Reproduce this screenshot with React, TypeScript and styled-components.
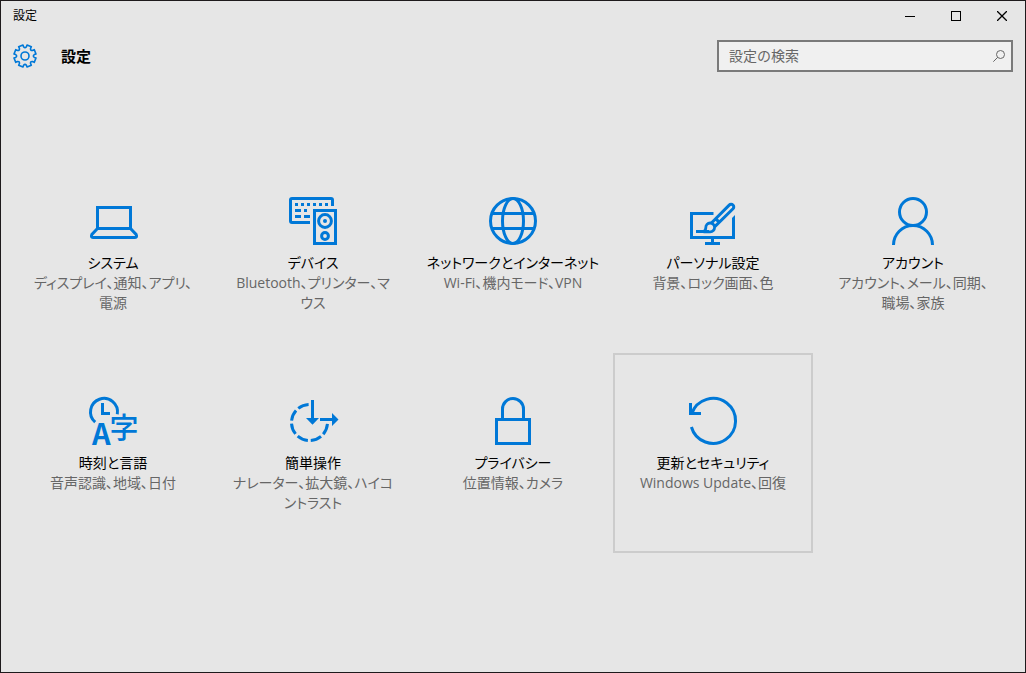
import React from "react";
import styled, { createGlobalStyle } from "styled-components";

const GlobalStyle = createGlobalStyle`
  *, *::before, *::after { box-sizing: border-box; }
  body {
    margin: 0;
    background: #e6e6e6;
    color: #000;
    font-family: "Open Sans", "Noto Sans CJK JP", sans-serif;
    font-size: 14px;
    line-height: 20px;
    font-feature-settings: "palt";
  }
`;

const Window = styled.div`
  min-height: 100vh;
  border: 1px solid #1e1a1c;
  background: #e6e6e6;
`;

const TitleBar = styled.div`
  display: flex;
  align-items: center;
  justify-content: space-between;
  height: 30px;
  padding-left: 12px;
  font-size: 12px;
`;

const CaptionButtons = styled.div`
  display: flex;
`;

const CaptionButton = styled.button`
  display: flex;
  align-items: center;
  justify-content: center;
  width: 46px;
  height: 30px;
  padding: 0;
  border: 0;
  background: none;
`;

const Header = styled.header`
  display: flex;
  align-items: center;
  gap: 24px;
  padding: 9px 12px 0;
`;

const Heading = styled.h1`
  flex: 1;
  margin: 0;
  font-size: 15px;
  font-weight: 700;
`;

const SearchBox = styled.label`
  display: flex;
  align-items: center;
  width: 296px;
  height: 32px;
  padding: 0 6px 0 10px;
  border: 2px solid #7a7a7a;
  background: #f0f0f0;
`;

const SearchInput = styled.input`
  flex: 1;
  min-width: 0;
  padding: 0;
  border: 0;
  outline: 0;
  background: none;
  font: inherit;
  font-feature-settings: normal;
  &::placeholder { color: #666; opacity: 1; }
`;

const Grid = styled.main`
  display: grid;
  grid-template-columns: repeat(auto-fill, 200px);
  justify-content: center;
  padding: 81px 12px 0;
`;

const Tile = styled.a<{ $active?: boolean }>`
  display: flex;
  flex-direction: column;
  align-items: center;
  height: 200px;
  padding-top: 42px;
  border: 2px solid ${(p) => (p.$active ? "#cccccc" : "transparent")};
  color: #000;
  text-align: center;
  text-decoration: none;
  white-space: nowrap;
`;

const TileIcon = styled.svg`
  width: 48px;
  height: 48px;
  margin-bottom: 8px;
  overflow: visible;
  fill: none;
  stroke: #0078d7;
  stroke-width: 3;
  .solid { fill: #0078d7; stroke: none; }
`;

const TileTitle = styled.span``;

const TileText = styled.span`
  color: #666;
  white-space: pre-line;
`;

const gearPath = (() => {
  const at = (deg: number, r: number) => {
    const a = (deg * Math.PI) / 180;
    return `${(12 + r * Math.cos(a)).toFixed(2)} ${(12 + r * Math.sin(a)).toFixed(2)}`;
  };
  let d = `M${at(10, 11.2)}`;
  for (let i = 0; i < 8; i++) {
    const c = i * 45 + 22.5;
    d += `L${at(c - 12, 11.2)}L${at(c + 12, 11.2)}L${at(c + 14, 9.4)}Q${at(c + 22.5, 7.4)} ${at(c + 31, 9.4)}`;
  }
  return `${d}Z`;
})();

const GearIcon = () => (
  <svg width="24" height="24" viewBox="0 0 24 24" fill="none" stroke="#0078d7" strokeWidth="1.6" strokeLinejoin="round" aria-hidden="true">
    <path d={gearPath} />
    <circle cx="12" cy="12" r="4" />
  </svg>
);

const LaptopIcon = (
  <>
    <rect x="8.5" y="10.5" width="33" height="21" />
    <path d="M8.5 31.5 2.9 37.4Q1.6 40.5 4 40.5H46Q48.4 40.5 47.1 37.4L41.5 31.5" />
  </>
);

const DevicesIcon = (
  <>
    <path d="M21 25.5H3Q1.5 25.5 1.5 24V3Q1.5 1.5 3 1.5H42Q43.5 1.5 43.5 3V9" />
    <path className="solid" d="M6 6h3v3h-3zM12 6h3v3h-3zM18 6h3v3h-3zM24 6h3v3h-3zM30 6h3v3h-3zM36 6h3v3h-3zM6 12h6v3h-6zM15 12h3v3h-3zM6 18h6v3h-6zM15 18h6v3h-6z" />
    <rect x="25.5" y="13.5" width="21" height="33" />
    <circle cx="36" cy="24" r="6.4" />
    <circle className="solid" cx="36" cy="24" r="2" />
    <circle cx="36" cy="39" r="3.4" />
  </>
);

const GlobeIcon = (
  <>
    <circle cx="24" cy="24" r="22.5" />
    <ellipse cx="24" cy="24" rx="10.5" ry="22.5" />
    <path d="M3 16.5H45M3 31.5H45" />
  </>
);

const BrushIcon = (
  <>
    <path d="M24.5 16.5H2.5V40.5H44.5V21" />
    <path className="solid" d="M43 21 46 18V21Z" />
    <path d="M23.5 42V46.5M16 46.5H31" />
    <path d="M7 34.5H20" />
    <path d="M14.5 34.5Q16.8 33.6 16.8 30.6A4.4 4.4 0 1 1 21.2 34.8H14.5" strokeWidth="2.8" />
    <path d="M22.4 26 40.2 8.1A2.5 2.5 0 0 1 44 11.8L25.8 29.6M26.6 21.6 30.6 25.6" strokeWidth="3" />
  </>
);

const PersonIcon = (
  <>
    <circle cx="24" cy="15" r="13.5" />
    <path d="M4.5 48A19.5 19.5 0 0 1 43.5 48" />
  </>
);

const IconLetter = styled.text`
  fill: #0078d7;
  stroke: none;
  font-family: "Noto Sans CJK JP", sans-serif;
  font-weight: 700;
`;

const IconKanji = styled(IconLetter)`
  font-weight: 500;
`;

const LanguageIcon = (
  <>
    <path d="M6.2 25.2A13.5 13.5 0 1 1 28.3 17.3" />
    <path d="M13.5 6V16.5H21" />
    <IconLetter x="3" y="48" fontSize="29">A</IconLetter>
    <IconKanji x="20.5" y="42" fontSize="29">字</IconKanji>
  </>
);

const EaseIcon = (
  <>
    <path d="M38.5 25.5A18 18 0 1 1 20.5 7.5" strokeDasharray="11.14 3" strokeDashoffset="-1.5" />
    <path d="M23.5 3V22M31 22.5H44" />
    <path className="solid" d="M17 21H30L23.5 27.7ZM43 16V29L49.5 22.5Z" />
  </>
);

const LockIcon = (
  <>
    <rect x="7.5" y="22.5" width="33" height="24" />
    <path d="M13.5 22.5V12A10.5 10.5 0 0 1 34.5 12V22.5" />
  </>
);

const UpdateIcon = (
  <>
    <path d="M2.8 16.5A22.5 22.5 0 1 1 2.4 30" />
    <path d="M1.5 6V16.5H12" />
  </>
);

const categories: { title: string; text: string; icon: React.ReactNode; active?: boolean }[] = [
  { title: "システム", text: "ディスプレイ、通知、アプリ、\n電源", icon: LaptopIcon },
  { title: "デバイス", text: "Bluetooth、プリンター、マ\nウス", icon: DevicesIcon },
  { title: "ネットワークとインターネット", text: "Wi-Fi、機内モード、VPN", icon: GlobeIcon },
  { title: "パーソナル設定", text: "背景、ロック画面、色", icon: BrushIcon },
  { title: "アカウント", text: "アカウント、メール、同期、\n職場、家族", icon: PersonIcon },
  { title: "時刻と言語", text: "音声認識、地域、日付", icon: LanguageIcon },
  { title: "簡単操作", text: "ナレーター、拡大鏡、ハイコ\nントラスト", icon: EaseIcon },
  { title: "プライバシー", text: "位置情報、カメラ", icon: LockIcon },
  { title: "更新とセキュリティ", text: "Windows Update、回復", icon: UpdateIcon, active: true },
];

export default function App() {
  return (
    <Window lang="ja">
      <GlobalStyle />
      <TitleBar>
        <span>設定</span>
        <CaptionButtons>
          <CaptionButton aria-label="最小化">
            <svg width="10" height="10" stroke="#000" fill="none"><path d="M0 5.5H10" /></svg>
          </CaptionButton>
          <CaptionButton aria-label="最大化">
            <svg width="10" height="10" stroke="#000" fill="none"><rect x="0.5" y="0.5" width="9" height="9" /></svg>
          </CaptionButton>
          <CaptionButton aria-label="閉じる">
            <svg width="10" height="10" stroke="#000" strokeWidth="1.3" fill="none"><path d="M0 0L10 10M10 0L0 10" /></svg>
          </CaptionButton>
        </CaptionButtons>
      </TitleBar>
      <Header>
        <GearIcon />
        <Heading>設定</Heading>
        <SearchBox>
          <SearchInput type="text" placeholder="設定の検索" aria-label="設定の検索" />
          <svg width="12" height="12" stroke="#666" fill="none" aria-hidden="true">
            <circle cx="7.5" cy="4.5" r="4" />
            <path d="M4.7 7.3 0.3 11.7" />
          </svg>
        </SearchBox>
      </Header>
      <Grid>
        {categories.map((c) => (
          <Tile key={c.title} href="#" $active={c.active}>
            <TileIcon viewBox="0 0 48 48" aria-hidden="true">{c.icon}</TileIcon>
            <TileTitle>{c.title}</TileTitle>
            <TileText>{c.text}</TileText>
          </Tile>
        ))}
      </Grid>
    </Window>
  );
}
